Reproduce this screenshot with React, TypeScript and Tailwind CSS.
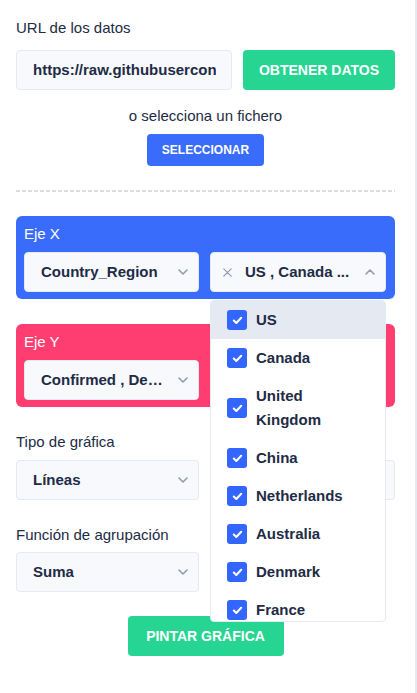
import React from "react";

const Chevron = ({ up = false }: { up?: boolean }) => (
  <svg width="10" height="6" viewBox="0 0 10 6" className="shrink-0 overflow-visible">
    <path
      d={up ? "M1 5 L5 1 L9 5" : "M1 1 L5 5 L9 1"}
      fill="none"
      stroke="#8f9bb3"
      strokeWidth="1.6"
      strokeLinecap="round"
      strokeLinejoin="round"
    />
  </svg>
);

const Check = () => (
  <span className="w-[20px] h-[20px] rounded-[3px] bg-[#3366ff] flex items-center justify-center shrink-0">
    <svg width="11" height="9" viewBox="0 0 11 9">
      <path d="M1.8 4.6 L4.3 7 L9.2 1.8" fill="none" stroke="white" strokeWidth="2.1" strokeLinecap="round" strokeLinejoin="round" />
    </svg>
  </span>
);

const Select = ({ text, className = "" }: { text: string; className?: string }) => (
  <div
    className={
      "h-[40px] rounded-[4px] bg-[#f7f9fc] border border-[#e4e9f2] flex items-center pl-[16px] pr-[10px] gap-2 " +
      className
    }
  >
    <span className="flex-1 min-w-0 truncate font-bold text-[15px] text-[#222b45]">{text}</span>
    <Chevron />
  </div>
);

const items: string[] = ["US", "Canada", "United Kingdom", "China", "Netherlands", "Australia", "Denmark", "France", "Germany"];

export default function App() {
  return (
    <div className="w-[417px] h-[693px] bg-white flex overflow-hidden" style={{ fontFamily: '"Liberation Sans", Arial, sans-serif' }}>
      <div className="w-[415px] h-full flex flex-col pl-[16px] pr-[20px] pt-[18px]">
        <div className="text-[15px] leading-[20px] text-[#222b45]">URL de los datos</div>
        <div className="mt-[12px] flex gap-[11px]">
          <div className="w-[216px] h-[40px] rounded-[4px] bg-[#f7f9fc] border border-[#e4e9f2] flex items-center pl-[16px] pr-[15px]">
            <div className="flex-1 min-w-0 overflow-hidden">
              <span className="whitespace-nowrap font-bold text-[15px] text-[#222b45]">https://raw.githubusercontent.com/CSSEGISandData</span>
            </div>
          </div>
          <button className="w-[152px] h-[40px] rounded-[4px] bg-[#26d591] text-white font-bold text-[14px]">
            OBTENER DATOS
          </button>
        </div>
        <div className="mt-[17px] text-center text-[15px] leading-[18px] text-[#222b45]">o selecciona un fichero</div>
        <div className="mt-[9px] flex justify-center">
          <button className="w-[117px] h-[32px] rounded-[4px] bg-[#3a6cfb] text-white font-bold text-[12px]">SELECCIONAR</button>
        </div>
        <div className="mt-[24px] h-[2px] bg-[repeating-linear-gradient(90deg,#dcdee3_0px,#dcdee3_4px,transparent_4px,transparent_6px)]" />

        <div className="mt-[24px] rounded-[6px] bg-[#3a6cfb] pl-[8px] pr-[9px] pt-[8px] pb-[7px]">
          <div className="text-[15px] leading-[20px] text-white">Eje X</div>
          <div className="mt-[8px] flex gap-[11px]">
            <Select text="Country_Region" className="w-[175px]" />
            <div className="relative w-[176px]">
              <div className="h-[40px] rounded-[4px] bg-[#f7f9fc] border border-[#e4e9f2] flex items-center pl-[12px] pr-[10px]">
                <svg width="9" height="9" viewBox="0 0 9 9" className="shrink-0">
                  <path d="M0.8 0.8 L8.2 8.2 M8.2 0.8 L0.8 8.2" stroke="#8f9bb3" strokeWidth="1.2" strokeLinecap="round" />
                </svg>
                <span className="ml-[13px] flex-1 min-w-0 whitespace-nowrap font-bold text-[15px] text-[#222b45]">US , Canada ...</span>
                <Chevron up />
              </div>
              <div className="absolute left-0 top-[48px] z-10 w-[176px] h-[322px] rounded-[4px] border border-[#e4e9f2] bg-white overflow-hidden">
                {items.map((it, i) => (
                  <div
                    key={it}
                    className={
                      "flex items-center gap-[9px] pl-[16px] pr-[30px] py-[7px] " + (i === 0 ? "bg-[#e4e9f2]" : "")
                    }
                  >
                    <Check />
                    <span className="font-bold text-[15px] leading-[24px] text-[#222b45]">{it}</span>
                  </div>
                ))}
              </div>
            </div>
          </div>
        </div>

        <div className="mt-[25px] rounded-[6px] bg-[#fe3d71] pl-[8px] pr-[9px] pt-[8px] pb-[7px]">
          <div className="text-[15px] leading-[20px] text-white">Eje Y</div>
          <div className="mt-[8px] flex gap-[11px]">
            <Select text="Confirmed , Deaths , Recovered" className="w-[175px]" />
            <Select text="" className="w-[176px]" />
          </div>
        </div>

        <div className="mt-[25px] text-[15px] leading-[20px] text-[#222b45]">Tipo de gráfica</div>
        <div className="mt-[8px] flex gap-[11px]">
          <Select text="Líneas" className="w-[183px]" />
          <div className="w-[185px] h-[40px] rounded-[4px] bg-[#f7f9fc] border border-[#e4e9f2]" />
        </div>

        <div className="mt-[25px] text-[15px] leading-[20px] text-[#222b45]">Función de agrupación</div>
        <div className="mt-[7px] flex">
          <Select text="Suma" className="w-[183px]" />
        </div>

        <div className="mt-[24px] flex justify-center">
          <button className="w-[156px] h-[40px] rounded-[4px] bg-[#26d591] text-white font-bold text-[14px]">PINTAR GRÁFICA</button>
        </div>
      </div>
      <div className="w-[2px] h-full bg-[#e4e9f2]" />
    </div>
  );
}
